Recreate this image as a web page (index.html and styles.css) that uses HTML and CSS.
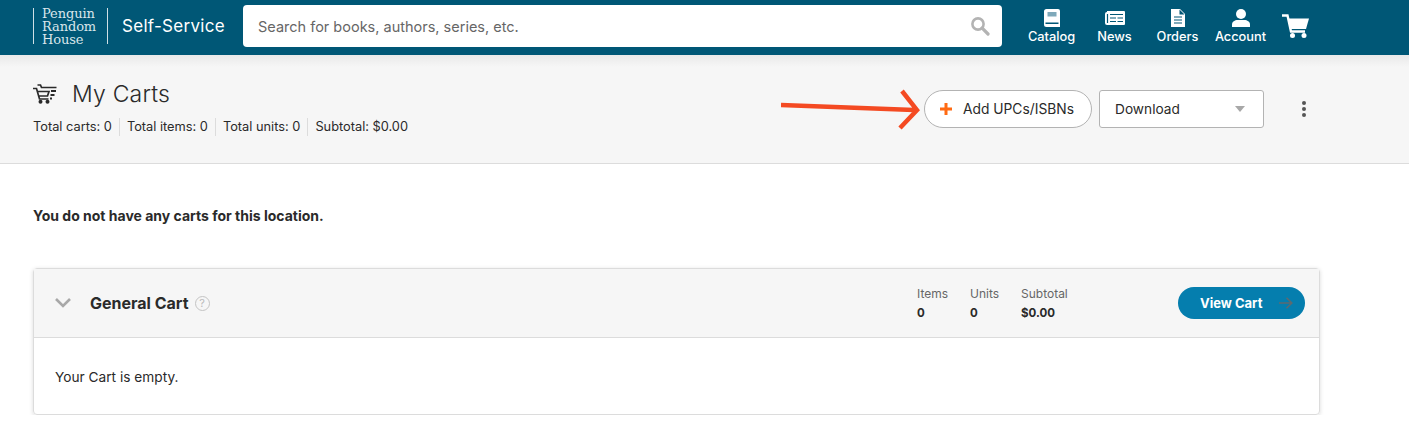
FILE: index.html
```html
<!DOCTYPE html>
<html lang="en">
<head>
    <meta charset="UTF-8">
    <title>My Carts</title>
    <link rel="stylesheet" href="styles.css">
</head>
<body>
    <header class="topbar">
        <div class="logo">
            <span>Penguin</span>
            <span>Random</span>
            <span>House</span>
        </div>
        <div class="app-name">Self-Service</div>
        <div class="search">
            <span class="search-text">Search for books, authors, series, etc.</span>
            <svg class="search-icon" width="20" height="20" viewBox="0 0 20 20">
                <circle cx="8" cy="8" r="5.6" fill="none" stroke="#b3b3b3" stroke-width="2.6"/>
                <path d="M12.2 12.2L18 18" stroke="#b3b3b3" stroke-width="3.2" stroke-linecap="round"/>
            </svg>
        </div>
        <nav class="nav">
            <a class="nav-item nav-catalog">
                <svg width="16" height="18" viewBox="0 0 16 18">
                    <path fill="#fff" d="M2.500 0H14a2 2 0 0 1 2 2v16H2.500A2.500 2.500 0 0 1 0 15.500v-13A2.500 2.500 0 0 1 2.500 0z"/>
                    <rect x="3.500" y="3" width="9" height="4.500" fill="#7fa9ba"/>
                    <rect x="1.500" y="13.500" width="13" height="1.500" fill="#005776"/>
                </svg>
                <span>Catalog</span>
            </a>
            <a class="nav-item">
                <svg width="20" height="18" viewBox="0 0 20 18">
                    <path fill="#fff" d="M2 2h17a1 1 0 0 1 1 1v12a1 1 0 0 1-1 1H2a2 2 0 0 1-2-2V5a2 2 0 0 1 2-2z"/>
                    <path stroke="#005776" stroke-width="1.200" d="M2.500 5v9M5 5.500h13M5 9h6M5 12.500h6M12.500 9h5.500M12.500 12.500h5.500"/>
                </svg>
                <span>News</span>
            </a>
            <a class="nav-item">
                <svg width="14" height="18" viewBox="0 0 14 18">
                    <path fill="#fff" d="M0 0h9l5 5v13H0z"/>
                    <path stroke="#005776" stroke-width="1.200" d="M3 8h8M3 11h8M3 14h8"/>
                    <path fill="#005776" d="M8.500 0.500v5h5z"/>
                </svg>
                <span>Orders</span>
            </a>
            <a class="nav-item">
                <svg width="18" height="18" viewBox="0 0 18 18">
                    <circle cx="9" cy="5" r="5" fill="#fff"/>
                    <path fill="#fff" d="M0 18v-2.500C0 12.500 3 11 5.500 11h7c2.500 0 5.500 1.500 5.500 4.500V18z"/>
                </svg>
                <span>Account</span>
            </a>
            <svg class="nav-cart" width="27" height="24" viewBox="0 0 27 24">
                <path fill="none" stroke="#fff" stroke-width="2.400" d="M0 1.500h5.500L9 17.500h14"/>
                <path fill="#fff" d="M6 4.500H27L24 15H8.500z"/>
                <circle cx="10.500" cy="21.500" r="2.500" fill="#fff"/>
                <circle cx="22" cy="21.500" r="2.500" fill="#fff"/>
            </svg>
        </nav>
    </header>

    <section class="page-head">
        <div class="page-title-block">
            <div class="page-title">
                <svg width="24" height="20" viewBox="0 0 24 20">
                    <path fill="none" stroke="#2a2a2a" stroke-width="1.700" d="M4.500 1h3l1 2.500H23.500M0 4.500h3.500l3 10.500h9M4.200 7.500H16l-1.500 4.500H6"/>
                    <path stroke="#2a2a2a" stroke-width="2" d="M18 7h5M17.500 11h4M17 14.500h2"/>
                    <circle cx="7.500" cy="17.800" r="2" fill="#2a2a2a"/>
                    <circle cx="14.500" cy="17.800" r="2" fill="#2a2a2a"/>
                </svg>
                <h1>My Carts</h1>
            </div>
            <ul class="totals">
                <li>Total carts: 0</li>
                <li>Total items: 0</li>
                <li>Total units: 0</li>
                <li>Subtotal: $0.00</li>
            </ul>
        </div>
        <div class="page-actions">
            <button class="add-btn">
                <svg width="12" height="12" viewBox="0 0 12 12">
                    <path stroke="#ff6a13" stroke-width="3" d="M6 0v12M0 6h12"/>
                </svg>
                <span>Add UPCs/ISBNs</span>
            </button>
            <div class="download">
                <span>Download</span>
                <span class="caret"></span>
            </div>
            <div class="more">
                <i></i><i></i><i></i>
            </div>
        </div>
        <svg class="arrow" width="142" height="42" viewBox="0 0 142 42">
            <path fill="none" stroke="#f44a22" stroke-width="4.500" d="M0 16L133 21M121 2L136 21 119 39"/>
        </svg>
    </section>

    <main class="content">
        <p class="no-carts">You do not have any carts for this location.</p>

        <div class="cart">
            <div class="cart-head">
                <svg class="chevron" width="16" height="10" viewBox="0 0 16 10">
                    <path fill="none" stroke="#a8a8a8" stroke-width="2.600" d="M1 1l7 7 7-7"/>
                </svg>
                <h2>General Cart</h2>
                <span class="help">?</span>
                <div class="cart-stats">
                    <div class="stat stat-items"><span>Items</span><b>0</b></div>
                    <div class="stat stat-units"><span>Units</span><b>0</b></div>
                    <div class="stat stat-subtotal"><span>Subtotal</span><b>$0.00</b></div>
                </div>
                <button class="view-btn">
                    <span>View Cart</span>
                    <svg width="14" height="12" viewBox="0 0 14 12">
                        <path fill="none" stroke="#5d6a70" stroke-width="1.600" d="M0 6h12.500M7.500 0.800L12.800 6 7.500 11.200"/>
                    </svg>
                </button>
            </div>
            <div class="cart-body">Your Cart is empty.</div>
        </div>
    </main>
</body>
</html>
```

FILE: styles.css
```css
* {
    box-sizing: border-box;
}
body {
    margin: 0;
    font-family: Inter, Arial, sans-serif;
    font-size: 13px;
    color: #2a2a2a;
    background-color: white;
    overflow: hidden;
}

/* top bar */
.topbar {
    display: flex;
    align-items: center;
    height: 55px;
    padding: 0 0 3px 33px;
    background-color: #005776;
    color: white;
}
.logo {
    display: flex;
    flex-direction: column;
    justify-content: center;
    width: 75px;
    height: 36px;
    padding-left: 8px;
    border-left: 1px solid #cfdfe5;
    border-right: 1px solid #cfdfe5;
    font-family: "DejaVu Serif", serif;
    font-size: 13px;
    font-weight: 300;
    line-height: 13px;
    letter-spacing: -0.1px;
    color: #d9e6eb;
}
.app-name {
    width: 135px;
    padding-left: 14px;
    font-size: 17px;
    letter-spacing: 0.3px;
}
.search {
    display: flex;
    align-items: center;
    justify-content: space-between;
    width: 759px;
    height: 42px;
    padding: 0 12px 0 15px;
    background-color: white;
    border-radius: 4px;
}
.search-text {
    font-size: 14.500px;
    color: #666;
}
.nav {
    display: flex;
    align-items: center;
    height: 100%;
}
.nav-item {
    display: flex;
    flex-direction: column;
    align-items: center;
    justify-content: space-between;
    width: 63px;
    height: 35px;
    font-size: 12.800px;
    font-weight: 500;
    line-height: 14px;
}
.nav-catalog {
    margin-left: 18px;
}
.nav-cart {
    margin-left: 10px;
}

/* page heading */
.page-head {
    position: relative;
    display: flex;
    justify-content: space-between;
    height: 109px;
    padding: 0 103px 0 33px;
    background: linear-gradient(#e9e9e9, #f6f6f6 12px);
    border-bottom: 1px solid #dcdcdc;
}
.page-title {
    display: flex;
    align-items: center;
    gap: 15px;
    margin-top: 25px;
}
.page-title h1 {
    margin: 0;
    font-size: 23px;
    font-weight: 300;
    line-height: 28px;
    letter-spacing: 0.2px;
}
.totals {
    display: flex;
    margin: 10px 0 0;
    padding: 0;
    list-style: none;
    font-size: 12.800px;
}
.totals li {
    padding: 0 7px;
    border-left: 1px solid #dcdcdc;
    line-height: 18px;
}
.totals li:first-child {
    padding-left: 0;
    border-left: 0;
}
.page-actions {
    display: flex;
    align-items: center;
    height: 38px;
    margin-top: 35px;
}
.add-btn {
    display: flex;
    align-items: center;
    gap: 11px;
    width: 168px;
    height: 38px;
    padding: 0 0 0 15px;
    background-color: white;
    border: 1px solid #b3b3b3;
    border-radius: 19px;
    font-family: inherit;
    font-size: 13.800px;
    color: #2a2a2a;
}
.download {
    display: flex;
    align-items: center;
    justify-content: space-between;
    width: 165px;
    height: 38px;
    margin-left: 7px;
    padding: 0 18px 0 15px;
    background-color: white;
    border: 1px solid #b3b3b3;
    border-radius: 3px;
    font-size: 13.700px;
}
.caret {
    border-top: 6px solid #a8a8a8;
    border-left: 5.500px solid transparent;
    border-right: 5.500px solid transparent;
}
.more {
    display: flex;
    flex-direction: column;
    gap: 2px;
    margin-left: 38px;
}
.more i {
    width: 4px;
    height: 4px;
    background-color: #555;
    border-radius: 50%;
}
/* orange annotation pointing at the add button */
.arrow {
    position: absolute;
    left: 781px;
    top: 34px;
}

/* carts */
.content {
    padding: 0 89px 0 33px;
}
.no-carts {
    margin: 44px 0 0;
    font-size: 14px;
    font-weight: 700;
    line-height: 16px;
}
.cart {
    height: 147px;
    margin-top: 44px;
    border: 1px solid #dcdcdc;
    border-radius: 4px;
    box-shadow: 0 1px 4px rgba(0, 0, 0, 0.15);
}
.cart-head {
    display: flex;
    align-items: center;
    height: 69px;
    padding: 0 14px 0 21px;
    background-color: #f6f6f6;
    border-bottom: 1px solid #dcdcdc;
}
.cart-head h2 {
    margin: 0 0 0 19px;
    font-size: 16px;
    font-weight: 700;
}
.help {
    display: flex;
    align-items: center;
    justify-content: center;
    width: 15px;
    height: 15px;
    margin-left: 6px;
    border: 1px solid #c4c4c4;
    border-radius: 50%;
    font-size: 11px;
    color: #bbb;
}
.cart-stats {
    display: flex;
    margin-left: auto;
}
.stat {
    display: flex;
    flex-direction: column;
    gap: 6px;
    font-size: 12px;
    color: #666;
}
.stat span {
    line-height: 13px;
}
.stat b {
    font-size: 11.500px;
    line-height: 14px;
    color: #2a2a2a;
}
.stat-items {
    width: 53px;
}
.stat-units {
    width: 51px;
}
.stat-subtotal {
    width: 157px;
}
.view-btn {
    display: flex;
    align-items: center;
    justify-content: space-between;
    width: 127px;
    height: 32px;
    padding: 0 12px 0 22px;
    background-color: #057eae;
    border: 0;
    border-radius: 16px;
    font-family: inherit;
    font-size: 13px;
    font-weight: 700;
    color: white;
}
.cart-body {
    padding: 31px 21px;
    font-size: 13.700px;
    line-height: 16px;
}
```
